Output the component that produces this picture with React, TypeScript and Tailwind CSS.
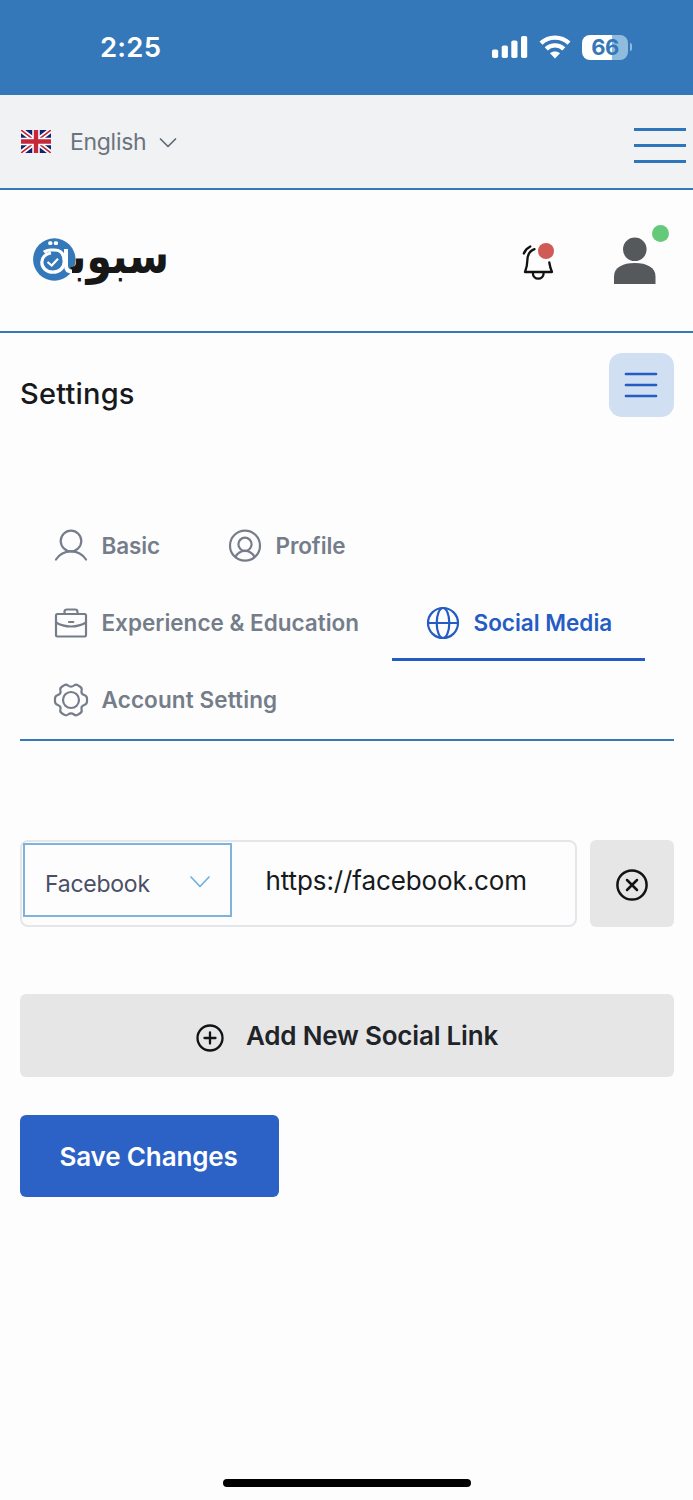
import type { ReactNode } from "react";

type TabProps = { icon: ReactNode; label: string; className: string };

function StatusBar() {
  return (
    <div className="flex h-[95px] items-center justify-between bg-[#3478ba] pr-[61px] pl-[100px] text-white">
      <span className="pt-[1px] text-[27.5px] leading-none font-semibold tracking-[0.2px]">2:25</span>
      <div className="flex items-center">
        <svg className="-mt-[2px]" width="36" height="24" viewBox="0 0 36 24" fill="currentColor">
          <rect x="0" y="14.5" width="6.2" height="8.5" rx="1.8" />
          <rect x="9.7" y="10.5" width="6.2" height="12.5" rx="1.8" />
          <rect x="19.3" y="5.5" width="6.2" height="17.5" rx="1.8" />
          <rect x="29" y="1" width="6.2" height="22" rx="1.8" />
        </svg>
        <svg className="-mt-[2px] ml-[11px]" width="32" height="24" viewBox="0 0 32 24" fill="none" stroke="currentColor" strokeWidth="4.4">
          <path d="M2 8.2C9.8 0.8 22.2 0.8 30 8.2" />
          <path d="M7.2 13.8C12.2 9.2 19.8 9.2 24.8 13.8" />
          <path d="M16 23.5L11 18.2C13.8 15.8 18.2 15.8 21 18.2Z" fill="currentColor" stroke="none" />
        </svg>
        <div className="-mt-[1px] ml-[11px] flex h-[25px] w-[46px] items-center justify-center rounded-[8px] bg-[linear-gradient(90deg,#fff_66%,#8fbbdc_66%)] text-[22px] leading-none font-bold tracking-[-0.6px] text-[#3478ba]">
          66
        </div>
        <div className="-mt-[1px] ml-[2px] h-[8px] w-[2px] rounded-r-full bg-[#8fbbdc]" />
      </div>
    </div>
  );
}

function Flag() {
  return (
    <svg width="30" height="23" viewBox="0 0 30 23">
      <rect width="30" height="23" fill="#10236e" />
      <path d="M0 0L30 23M30 0L0 23" stroke="#fff" strokeWidth="5" />
      <path d="M0 0L30 23M30 0L0 23" stroke="#c5283b" strokeWidth="1.7" />
      <path d="M15 0V23M0 11.5H30" stroke="#fff" strokeWidth="7.5" />
      <path d="M15 0V23M0 11.5H30" stroke="#c5283b" strokeWidth="4.4" />
    </svg>
  );
}

function Logo() {
  return (
    <svg width="144" height="100" viewBox="32 210 144 100" role="img" aria-label="سبوبة">
      <circle cx="54.3" cy="259.5" r="21.2" fill="#3478ba" />
      <text
        transform="translate(169 273) scale(1 1.28)"
        x="0"
        y="0"
        direction="rtl"
        textLength="98"
        lengthAdjust="spacingAndGlyphs"
        fontSize="38"
        fontWeight="700"
        fontFamily="DejaVu Sans, sans-serif"
        fill="#171717"
      >
        {"سبوب\u200d"}
      </text>
      <g fill="none" stroke="#fff">
        <path d="M44 252.3Q46.5 250 51 250H54.5C61 250 64.2 254.5 64.2 261.5C64.2 268 59.5 272.2 53 272.2C46.3 272.2 41.8 267.7 41.8 262.3C41.8 257.5 45.5 254 51 253" strokeWidth="3.2" />
        <path d="M66 249V265.5C66 269.8 68 271.5 72 271.5" strokeWidth="4" />
        <path d="M47.5 262L51.7 265.5L58 258.8" strokeWidth="2.2" />
      </g>
      <rect x="48.2" y="241.3" width="4.2" height="3.8" rx="1.5" fill="#fff" />
      <rect x="53.8" y="241.3" width="4.2" height="3.8" rx="1.5" fill="#fff" />
    </svg>
  );
}

function Header() {
  return (
    <header className="flex h-[143px] items-start border-b-2 border-[#3478ba] pl-[32px]">
      <div className="mt-[20px]">
        <Logo />
      </div>
      <div className="relative mt-[50px] ml-[346px]">
        <svg width="34" height="42" viewBox="522 240 34 42" fill="none" stroke="#111" strokeWidth="2.3" strokeLinecap="round" strokeLinejoin="round">
          <path d="M534.5 249.2C529.5 251 527.5 255 527.4 260C527.3 266 526.5 268 525 272H552C550.5 268.5 549.8 266 549.3 262.5" />
          <path d="M532.8 272.5C532.8 280.8 543.7 280.8 543.7 272.5" />
          <path d="M523.8 253.5C525 250.5 527.2 248 530.3 246.5" />
        </svg>
        <span className="absolute top-[3px] left-[16px] size-[16px] rounded-full bg-[#cf5a56]" />
      </div>
      <div className="relative mt-[45px] ml-[58px]">
        <svg width="42" height="50" viewBox="614 235 42 50" fill="#55595c">
          <circle cx="634.8" cy="249.3" r="11.8" />
          <path d="M614 284V276.5C614 267.5 622.5 263 634.8 263C647 263 655.5 267.5 655.5 276.5V284Z" />
        </svg>
        <span className="absolute -top-[10px] left-[38px] size-[17px] rounded-full bg-[#64ca7a]" />
      </div>
    </header>
  );
}

function Tab({ icon, label, className }: TabProps) {
  return (
    <button className={`flex h-[77px] items-center pl-[33px] text-left font-semibold whitespace-nowrap ${className}`}>
      {icon}
      <span className="ml-[13px]">{label}</span>
    </button>
  );
}

function TabIcon({ children }: { children: ReactNode }) {
  return (
    <svg className="shrink-0" width="36" height="36" viewBox="0 0 36 36" fill="none" stroke="currentColor" strokeWidth="2.2" strokeLinecap="round" strokeLinejoin="round">
      {children}
    </svg>
  );
}

function Tabs() {
  return (
    <nav className="mt-[90px] flex flex-wrap border-b-2 border-[#3478ba] pb-[1px] text-[22.5px] text-[#757d8a]">
      <Tab
        className="w-[174px] tracking-[-0.15px]"
        label="Basic"
        icon={
          <TabIcon>
            <circle cx="18" cy="13" r="10.3" />
            <path d="M3 31.5C6.2 26.5 11.5 23.3 18 23.3S29.8 26.5 33 31.5" />
          </TabIcon>
        }
      />
      <Tab
        className="w-[300px] tracking-[-0.1px]"
        label="Profile"
        icon={
          <TabIcon>
            <circle cx="18" cy="17.7" r="15" />
            <circle cx="18" cy="16.3" r="6.6" />
            <path d="M8.5 29C10.6 25 14 22.9 18 22.9S25.4 25 27.5 29" />
          </TabIcon>
        }
      />
      <Tab
        className="w-[372px]"
        label="Experience & Education"
        icon={
          <TabIcon>
            <rect x="3" y="9" width="30" height="22.5" rx="1.4" />
            <path d="M11.5 9V6.8Q11.5 4.5 14 4.5H22Q24.5 4.5 24.5 6.8V9M3 17.5C11.5 22.8 24.5 22.8 33 17.5M16 17H20.3" />
          </TabIcon>
        }
      />
      <Tab
        className="w-[253px] border-b-3 border-[#255cc4] pt-[3px] text-[#255cc4]"
        label="Social Media"
        icon={
          <TabIcon>
            <circle cx="18" cy="18" r="15" />
            <ellipse cx="18" cy="18" rx="6.3" ry="15" />
            <path d="M3 18H33" />
          </TabIcon>
        }
      />
      <Tab
        className="w-[300px] tracking-[0.12px]"
        label="Account Setting"
        icon={
          <TabIcon>
            <circle cx="18" cy="18" r="8" />
            <path d="M15 3.5Q18 5.8 21 3.5Q23 2 25 3.3L27.5 5Q29.2 6.2 28.6 8.5Q27.7 11.8 31.2 13Q34 14 34 16.5V19.5Q34 22 31.2 23Q27.7 24.2 28.6 27.5Q29.2 29.8 27.5 31L25 32.7Q23 34 21 32.5Q18 30.2 15 32.5Q13 34 11 32.7L8.5 31Q6.8 29.8 7.4 27.5Q8.3 24.2 4.8 23Q2 22 2 19.5V16.5Q2 14 4.8 13Q8.3 11.8 7.4 8.5Q6.8 6.2 8.5 5L11 3.3Q13 2 15 3.5Z" />
          </TabIcon>
        }
      />
    </nav>
  );
}

export default function App() {
  return (
    <div className="flex h-[1500px] w-[693px] flex-col overflow-hidden bg-[#fdfdfe] font-['Inter',sans-serif]">
      <StatusBar />
      <div className="flex h-[95px] items-start border-b-2 border-[#3478ba] bg-[#f0f2f4] pl-[21px]">
        <div className="mt-[35px]">
          <Flag />
        </div>
        <span className="mt-[29px] ml-[19px] text-[23px] leading-[36px] tracking-[-0.3px] text-[#6c737d]">English</span>
        <svg className="mt-[42px] ml-[13px]" width="18" height="12" viewBox="0 0 18 12" fill="none" stroke="#5f6873" strokeWidth="1.7" strokeLinecap="round" strokeLinejoin="round">
          <path d="M1.5 2L9 9.5L16.5 2" />
        </svg>
        <div className="mt-[33px] mr-[7px] ml-auto flex w-[52px] flex-col gap-[13px]">
          <span className="h-[3px] bg-[#2f75b9]" />
          <span className="h-[3px] bg-[#2f75b9]" />
          <span className="h-[3px] bg-[#2f75b9]" />
        </div>
      </div>
      <Header />
      <main className="px-[19.5px] pt-[19.5px]">
        <div className="flex h-[64.5px] justify-between">
          <h1 className="mt-[22px] ml-[0.5px] text-[29px] leading-[38px] font-medium tracking-[0.2px] text-[#17191c]">Settings</h1>
          <button aria-label="Menu" className="flex size-[64.5px] items-center justify-center rounded-[13px] bg-[#d1dff2]">
            <svg width="34" height="28" viewBox="0 0 34 28" stroke="#255cc4" strokeWidth="2.7" strokeLinecap="round">
              <path d="M2 3H32M2 14H32M2 25H32" />
            </svg>
          </button>
        </div>
        <Tabs />
        <div className="mt-[99px] flex h-[87px] justify-between">
          <div className="flex w-[557px] rounded-[8px] border-2 border-[#e5e6e9] pt-[1px] pl-[1px]">
            <div className="flex h-[74px] w-[209px] items-center justify-between border-2 border-[#7db3dd] pt-[8px] pr-[19px] pl-[20.5px] text-[23px] tracking-[-0.25px] text-[#4a4f66]">
              Facebook
              <svg className="mb-[5px]" width="22" height="14" viewBox="0 0 22 14" fill="none" stroke="#6fb0e0" strokeWidth="1.7" strokeLinecap="round" strokeLinejoin="round">
                <path d="M2 2L11 11.5L20 2" />
              </svg>
            </div>
            <span className="mt-[19px] ml-[34px] text-[26px] leading-[38px] tracking-[-0.1px] text-[#17191c]">https://facebook.com</span>
          </div>
          <button aria-label="Remove" className="flex w-[84px] items-center justify-center rounded-[6px] bg-[#e6e6e6] pt-[2px]">
            <svg width="34" height="34" viewBox="0 0 34 34" fill="none" stroke="#111315" strokeWidth="2.5" strokeLinecap="round">
              <circle cx="17" cy="17" r="14.6" />
              <path d="M12 12L22 22M22 12L12 22" />
            </svg>
          </button>
        </div>
        <button className="mt-[67px] flex h-[83px] w-full items-center rounded-[6px] bg-[#e6e6e6] pl-[175px] text-[26px] font-semibold tracking-[-0.2px] text-[#202328]">
          <svg className="mt-[4px]" width="30" height="30" viewBox="0 0 30 30" fill="none" stroke="#111315" strokeWidth="2.3" strokeLinecap="round">
            <circle cx="15" cy="15" r="12.5" />
            <path d="M15 9.5V20.5M9.5 15H20.5" />
          </svg>
          <span className="ml-[21.5px]">Add New Social Link</span>
        </button>
        <button className="mt-[38px] flex h-[82px] w-[259px] items-center rounded-[6px] bg-[#2c62c6] pl-[40px] text-[26px] font-semibold tracking-[-0.15px] text-white">
          Save Changes
        </button>
      </main>
      <div className="mx-auto mt-auto mb-[13px] h-[8px] w-[248px] rounded-full bg-black" />
    </div>
  );
}
